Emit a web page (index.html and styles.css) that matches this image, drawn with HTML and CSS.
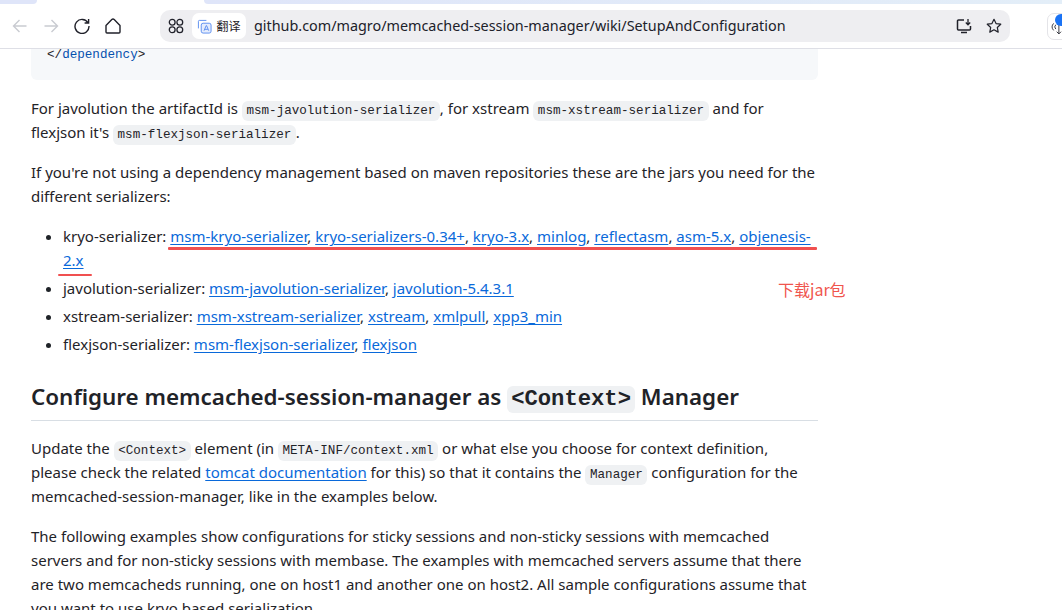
FILE: index.html
```html
<!DOCTYPE html>
<html lang="en">
<head>
  <meta charset="UTF-8" />
  <title>SetupAndConfiguration</title>
  <link rel="stylesheet" href="styles.css">
</head>
<body>

  <div class="tabstrip">
    <div class="strip-left"></div>
    <div class="strip-right"></div>
  </div>

  <header class="toolbar">
    <svg class="nav-icon" viewBox="0 0 16 16"><path d="M14.500 8H1.500M7.500 2 1.500 8l6 6" stroke="#c9cbd1"/></svg>
    <svg class="nav-icon" viewBox="0 0 16 16"><path d="M1.500 8h13M8.500 2l6 6-6 6" stroke="#c9cbd1"/></svg>
    <svg class="nav-icon" viewBox="0 0 16 16"><path d="M14 4.800A7 7 0 1 0 15 8M14.600 1v4h-4" stroke="#20212a"/></svg>
    <svg class="nav-icon" viewBox="0 0 16 16"><path d="M1 7.500 6.800 1.500a1.700 1.700 0 0 1 2.400 0L15 7.500V14a1 1 0 0 1-1 1H2a1 1 0 0 1-1-1z" stroke="#20212a" stroke-linejoin="round"/></svg>
    <div class="omnibox">
      <svg class="apps-icon" viewBox="0 0 16 16">
        <circle cx="4.200" cy="4.200" r="2.900"/><circle cx="11.800" cy="4.200" r="2.900"/>
        <circle cx="4.200" cy="11.800" r="2.900"/><circle cx="11.800" cy="11.800" r="2.900"/>
      </svg>
      <div class="translate">
        <svg class="translate-icon" viewBox="0 0 16 16">
          <path d="M10 1.500H2.500a1 1 0 0 0-1 1V10" stroke="#5b8def" fill="none"/>
          <rect x="4.500" y="4.500" width="10.500" height="10.500" rx="2" stroke="#5b8def" fill="#e4ecfd"/>
          <path d="M7.500 12.500 9.800 7h.4l2.300 5.500M8.400 11h3.200" stroke="#5b8def" fill="none"/>
        </svg>
        <span>翻译</span>
      </div>
      <span class="url">github.com/magro/memcached-session-manager/wiki/SetupAndConfiguration</span>
      <svg class="omni-icon" viewBox="0 0 16 16">
        <path d="M8 2H2.500a1 1 0 0 0-1 1v8a1 1 0 0 0 1 1h11a1 1 0 0 0 1-1V8" stroke="#20212a" stroke-width="1.500" fill="none"/>
        <path d="M5 14.500h6" stroke="#20212a" stroke-width="1.500"/>
        <path d="M12 1v5.500M9.800 4.500 12 6.800l2.200-2.300" stroke="#20212a" stroke-width="1.300" fill="none"/>
      </svg>
      <svg class="omni-icon star" viewBox="0 0 16 16">
        <path d="M8 1.300l2.050 4.300 4.700.6-3.450 3.250.9 4.650L8 11.800l-4.200 2.300.9-4.650L1.250 6.200l4.700-.6z" stroke="#20212a" stroke-width="1.200" stroke-linejoin="round" fill="none"/>
      </svg>
    </div>
    <div class="ext-btn">
      <svg class="ext-icon" viewBox="0 0 16 20">
        <path d="M3 7a6 6 0 0 0 0 8M5.500 8.500a3.500 3.500 0 0 0 0 5" stroke="#20212a" fill="none"/>
        <path d="M9 6v13M6.500 16.500 9 19l2.500-2.500" stroke="#20212a" fill="none"/>
      </svg>
      <span class="ext-badge"></span>
    </div>
  </header>

  <main class="wiki">
    <pre class="code-block">&lt;/<span class="tag">dependency</span>&gt;</pre>

    <p>For javolution the artifactId is <code>msm-javolution-serializer</code>, for xstream <code>msm-xstream-serializer</code> and for<br>
    flexjson it's <code>msm-flexjson-serializer</code>.</p>

    <p>If you're not using a dependency management based on maven repositories these are the jars you need for the<br>
    different serializers:</p>

    <ul>
      <li>kryo-serializer: <a href="#">msm-kryo-serializer</a>, <a href="#">kryo-serializers-0.34+</a>, <a href="#">kryo-3.x</a>, <a href="#">minlog</a>, <a href="#">reflectasm</a>, <a href="#">asm-5.x</a>, <a href="#">objenesis-<br>2.x</a></li>
      <li>javolution-serializer: <a href="#">msm-javolution-serializer</a>, <a href="#">javolution-5.4.3.1</a></li>
      <li>xstream-serializer: <a href="#">msm-xstream-serializer</a>, <a href="#">xstream</a>, <a href="#">xmlpull</a>, <a href="#">xpp3_min</a></li>
      <li>flexjson-serializer: <a href="#">msm-flexjson-serializer</a>, <a href="#">flexjson</a></li>
    </ul>

    <h2>Configure memcached-session-manager as <code>&lt;Context&gt;</code> Manager</h2>

    <p>Update the <code>&lt;Context&gt;</code> element (in <code>META-INF/context.xml</code> or what else you choose for context definition,<br>
    please check the related <a href="#">tomcat documentation</a> for this) so that it contains the <code>Manager</code> configuration for the<br>
    memcached-session-manager, like in the examples below.</p>

    <p>The following examples show configurations for sticky sessions and non-sticky sessions with memcached<br>
    servers and for non-sticky sessions with membase. The examples with memcached servers assume that there<br>
    are two memcacheds running, one on host1 and another one on host2. All sample configurations assume that<br>
    you want to use kryo based serialization.</p>
  </main>

  <!-- hand drawn marks on the screenshot -->
  <div class="mark mark-long"></div>
  <div class="mark mark-short"></div>
  <div class="mark-note">下载jar包</div>

</body>
</html>
```

FILE: styles.css
```css
html, body {
  height: 100%;
}
body {
  margin: 0;
  background: #fff;
  color: #1f2328;
  font-family: 'Noto Sans', sans-serif;
  font-size: 15px;
  line-height: 24px;
  overflow: hidden;
  position: relative;
}
.tabstrip {
  height: 4px;
  display: flex;
  gap: 167px;
}
.strip-left {
  width: 37px;
  background: #dfe5f9;
  border-radius: 0 0 8px 0;
}
.strip-right {
  flex: 1;
  background: linear-gradient(90deg, #dfe5f9, #e3eef8);
  border-radius: 0 0 0 8px;
}
.toolbar {
  height: 45px;
  box-sizing: border-box;
  border-bottom: 1px solid #dedfe6;
  display: flex;
  align-items: center;
  padding-left: 12px;
  background: #fff;
}
.nav-icon {
  width: 16px;
  height: 16px;
  margin-right: 15px;
  flex: none;
}
.nav-icon path {
  fill: none;
  stroke-width: 1.4;
}
.omnibox {
  margin-left: 24px;
  width: 850px;
  height: 32px;
  background: #eeeef1;
  border-radius: 10px;
  display: flex;
  align-items: center;
  flex: none;
}
.apps-icon {
  width: 16px;
  height: 16px;
  margin-left: 8px;
}
.apps-icon circle {
  fill: none;
  stroke: #20212a;
  stroke-width: 1.3;
}
.translate {
  margin-left: 8px;
  width: 54px;
  height: 26px;
  background: #fff;
  border-radius: 7px;
  display: flex;
  align-items: center;
  justify-content: center;
  gap: 4px;
  font-family: 'Noto Sans CJK SC', sans-serif;
  font-size: 12px;
}
.translate-icon {
  width: 15px;
  height: 15px;
}
.url {
  margin-left: 8px;
  font-size: 14.36px;
  color: #20212a;
  white-space: nowrap;
  flex: 1;
}
.omni-icon {
  width: 16px;
  height: 16px;
  margin-right: 14px;
  flex: none;
}
.omni-icon.star {
  margin-right: 8px;
}
.ext-btn {
  margin-left: 37px;
  width: 30px;
  height: 27px;
  box-sizing: border-box;
  border: 1px solid #e4e4e8;
  border-radius: 7px;
  position: relative;
  flex: none;
}
.ext-icon {
  width: 14px;
  height: 18px;
  margin: 3px 0 0 3px;
}
.ext-badge {
  position: absolute;
  top: 0;
  left: 7px;
  width: 12px;
  height: 12px;
  border-radius: 50%;
  background: #1a73f5;
}

.wiki {
  width: 787px;
  margin-left: 31px;
}
.code-block {
  margin: 0 0 16px;
  height: 31px;
  box-sizing: border-box;
  padding: 0 16px;
  background: #f6f8fa;
  border-radius: 0 0 6px 6px;
  font-family: 'Liberation Mono', monospace;
  font-size: 12.6px;
  line-height: 13px;
}
.tag {
  color: #0550ae;
}
p {
  margin: 0 0 16px;
  white-space: nowrap;
}
a {
  color: #0969da;
  text-decoration: underline;
  text-underline-offset: 2px;
}
code {
  font-family: 'Liberation Mono', monospace;
  font-size: 12.6px;
  line-height: 1;
  background: #eff1f3;
  border-radius: 6px;
  padding: 3px 4.500px;
}
ul {
  margin: 0 0 26px;
  padding-left: 32px;
  white-space: nowrap;
}
li {
  margin-top: 4px;
}
li:first-child {
  margin-top: 0;
}
h2 {
  margin: 0 0 15px;
  font-size: 22.4px;
  font-weight: 600;
  line-height: 30px;
  padding-bottom: 8px;
  border-bottom: 1px solid #d8dee4;
  white-space: nowrap;
}
h2 code {
  font-size: 22.2px;
  font-weight: 700;
  padding: 1px 4px;
}

.mark {
  position: absolute;
  background: #f05050;
  border-radius: 1px;
}
.mark-long {
  left: 168px;
  top: 247px;
  width: 649px;
  height: 3px;
}
.mark-short {
  left: 58px;
  top: 274px;
  width: 34px;
  height: 2px;
}
.mark-note {
  position: absolute;
  left: 778px;
  top: 277px;
  color: #f0554d;
  font-family: 'Noto Sans CJK SC', sans-serif;
  font-size: 16px;
}
```
